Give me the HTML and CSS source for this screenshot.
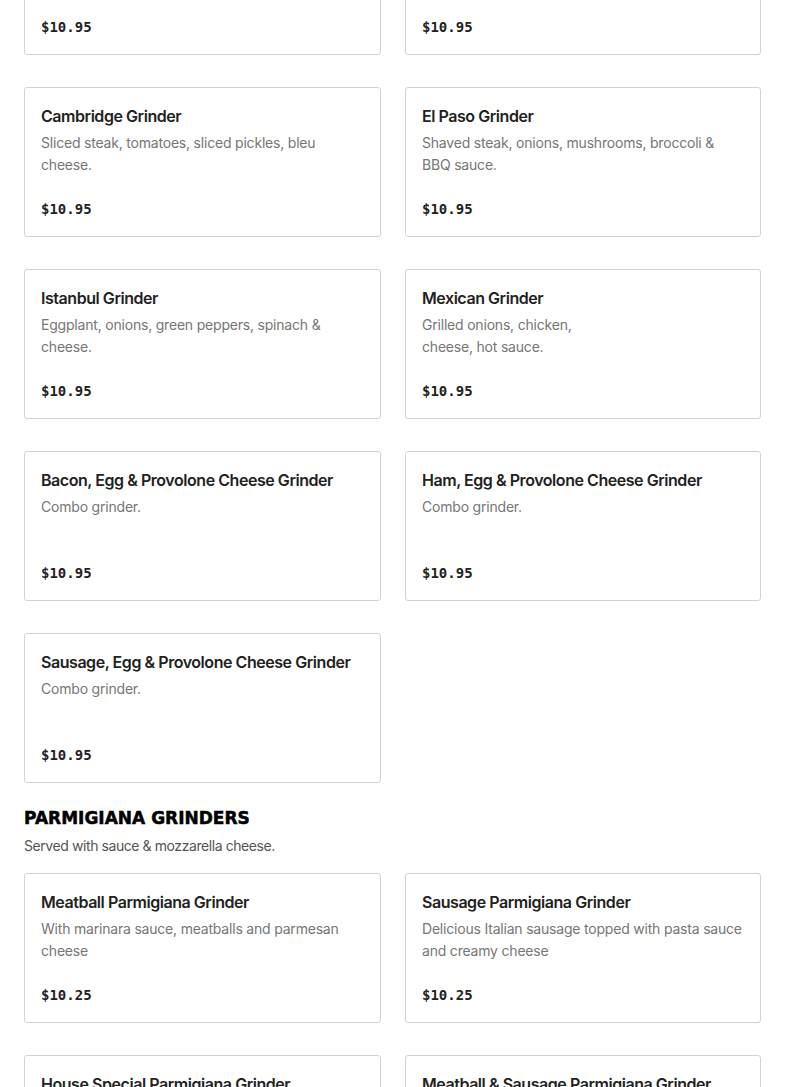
FILE: index.html
```html
<!DOCTYPE html>
<html lang="en">
<head>
<meta charset="utf-8">
<title>Menu – Grinders</title>
<link rel="stylesheet" href="styles.css">
</head>
<body>
<main class="menu">
  <section class="section section--first">
    <div class="grid">
      <article class="card">
        <h3 class="card-title">Steak &amp; Cheese Grinder</h3>
        <p class="card-desc">Shaved steak, onions &amp; cheese.</p>
        <p class="card-price">$10.95</p>
      </article>
      <article class="card">
        <h3 class="card-title">Chicken Grinder</h3>
        <p class="card-desc">Grilled chicken, onions &amp; cheese.</p>
        <p class="card-price">$10.95</p>
      </article>
      <article class="card">
        <h3 class="card-title">Cambridge Grinder</h3>
        <p class="card-desc">Sliced steak, tomatoes, sliced pickles, bleu cheese.</p>
        <p class="card-price">$10.95</p>
      </article>
      <article class="card">
        <h3 class="card-title">El Paso Grinder</h3>
        <p class="card-desc">Shaved steak, onions, mushrooms, broccoli &amp; BBQ sauce.</p>
        <p class="card-price">$10.95</p>
      </article>
      <article class="card">
        <h3 class="card-title">Istanbul Grinder</h3>
        <p class="card-desc">Eggplant, onions, green peppers, spinach &amp; cheese.</p>
        <p class="card-price">$10.95</p>
      </article>
      <article class="card">
        <h3 class="card-title">Mexican Grinder</h3>
        <p class="card-desc">Grilled onions, chicken,<br>cheese, hot sauce.</p>
        <p class="card-price">$10.95</p>
      </article>
      <article class="card">
        <h3 class="card-title">Bacon, Egg &amp; Provolone Cheese Grinder</h3>
        <p class="card-desc">Combo grinder.</p>
        <p class="card-price">$10.95</p>
      </article>
      <article class="card">
        <h3 class="card-title">Ham, Egg &amp; Provolone Cheese Grinder</h3>
        <p class="card-desc">Combo grinder.</p>
        <p class="card-price">$10.95</p>
      </article>
      <article class="card">
        <h3 class="card-title">Sausage, Egg &amp; Provolone Cheese Grinder</h3>
        <p class="card-desc">Combo grinder.</p>
        <p class="card-price">$10.95</p>
      </article>
    </div>
  </section>

  <section class="section">
    <h2 class="section-title">PARMIGIANA GRINDERS</h2>
    <p class="section-sub">Served with sauce &amp; mozzarella cheese.</p>
    <div class="grid">
      <article class="card">
        <h3 class="card-title">Meatball Parmigiana Grinder</h3>
        <p class="card-desc">With marinara sauce, meatballs and parmesan cheese</p>
        <p class="card-price">$10.25</p>
      </article>
      <article class="card">
        <h3 class="card-title">Sausage Parmigiana Grinder</h3>
        <p class="card-desc">Delicious Italian sausage topped with pasta sauce and creamy cheese</p>
        <p class="card-price">$10.25</p>
      </article>
      <article class="card">
        <h3 class="card-title">House Special Parmigiana Grinder</h3>
        <p class="card-desc">Meatballs, sausage, sauce &amp; cheese</p>
        <p class="card-price">$10.95</p>
      </article>
      <article class="card">
        <h3 class="card-title">Meatball &amp; Sausage Parmigiana Grinder</h3>
        <p class="card-desc">Meatballs and sausage with sauce &amp; cheese</p>
        <p class="card-price">$10.95</p>
      </article>
    </div>
  </section>
</main>
</body>
</html>
```

FILE: styles.css
```css
* { box-sizing: border-box; }

html, body {
  margin: 0;
  padding: 0;
  background: #ffffff;
}

body {
  font-family: "Inter", "Roboto", "Liberation Sans", sans-serif;
  color: #222222;
  overflow: hidden;
}

.menu {
  padding: 0 24px 0 24px;
  margin-top: -95px;
}

.section--first {
  margin-bottom: 23px;
}

.grid {
  display: grid;
  grid-template-columns: 357px 356px;
  column-gap: 24px;
  row-gap: 32px;
}

.card {
  border: 1px solid #d2d2d2;
  border-radius: 3px;
  padding: 16px 14px 16px 16px;
  height: 150px;
  display: flex;
  flex-direction: column;
}

.card-title {
  margin: 0;
  font-size: 16px;
  line-height: 24px;
  font-weight: 600;
  color: #222222;
  letter-spacing: -0.45px;
}

.card-desc {
  margin: 4px 0 0 0;
  font-size: 14px;
  line-height: 22px;
  color: #767676;
  font-weight: 400;
  letter-spacing: -0.2px;
  min-height: 44px;
}

.card-price {
  margin: auto 0 0 0;
  font-family: "DejaVu Sans Mono", "Liberation Mono", monospace;
  font-weight: 700;
  font-size: 14px;
  line-height: 22px;
  color: #222222;
}

.section-title {
  margin: 0;
  font-family: "DejaVu Sans", "Liberation Sans", sans-serif;
  font-weight: 700;
  font-size: 17px;
  line-height: 24px;
  color: #000000;
  -webkit-text-stroke: 0.5px #000000;
}

.section-sub {
  margin: 5px 0 16px 0;
  font-size: 14px;
  line-height: 22px;
  color: #555555;
  letter-spacing: -0.42px;
}
```
